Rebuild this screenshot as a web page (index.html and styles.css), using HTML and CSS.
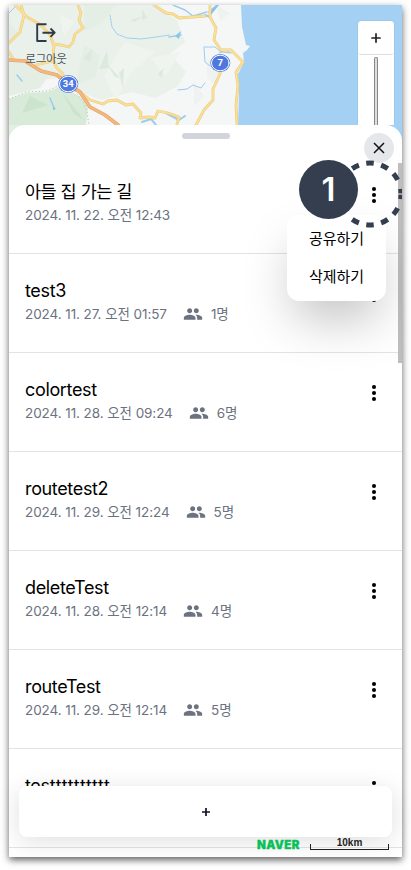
FILE: index.html
```html
<!DOCTYPE html>
<html lang="ko">
<head>
<meta charset="utf-8">
<meta name="viewport" content="width=device-width">
<title>경로 목록</title>
<link rel="stylesheet" href="styles.css">
</head>
<body>
<svg class="defs" aria-hidden="true">
  <symbol id="people" viewBox="0 0 24 24"><path d="M16 11c1.66 0 2.99-1.34 2.99-3S17.66 5 16 5s-3 1.34-3 3 1.34 3 3 3zm-8 0c1.66 0 2.99-1.34 2.99-3S9.66 5 8 5 5 6.340 5 8s1.340 3 3 3zm0 2c-2.330 0-7 1.170-7 3.500V19h14v-2.500c0-2.330-4.670-3.500-7-3.500zm8 0c-.29 0-.62.02-.97.05 1.160.84 1.970 1.970 1.970 3.450V19h6v-2.500c0-2.330-4.670-3.500-7-3.500z"/></symbol>
  <symbol id="dots" viewBox="0 0 6 18"><circle cx="3" cy="3" r="2.050"/><circle cx="3" cy="9" r="2.050"/><circle cx="3" cy="15" r="2.050"/></symbol>
</svg>
<div class="app">
  <div class="map">
    <svg class="map-art" viewBox="9 5 393 120" fill="none" stroke-linejoin="round" stroke-linecap="round">
      <path fill="#f5f6f6" d="M9 5h393v120H9z"/>
      <path fill="#eaf1ea" d="M9 5h146l22 15 8 22-15 12 16 18-8 14-22 12-25-6-30 8-20-8-16-14-30 2-30 12z"/>
      <path fill="#e4eee4" d="M84 5h32l-14 18-18 8zM9 22l10 12-10 8zM20 62l30 12-10 14-31 8V62zM84 45l16 10-4 22-20 8z"/>
      <path fill="#eff4ef" d="M125 42l30 10-25 22-14 26-12-24zM150 58l30-6-14 24zM60 14l14 8-10 14z"/>
      <path fill="#dce9dd" d="M142 9l5 9-5 2zM99 69l8-18 2 17zM119 73l5-5-1 20zM158 74l6-6-3 10zM84 58l9-10-3 14zM130 20l14-4-10 6zM107 64l13 14-5-1z"/>
      <path fill="#d8ebd8" d="M9 99l18-6 20-1 15-6 18 11 8 10-2 18H9z"/>
      <path fill="#cce3cd" d="M30 96l18 9-26 8zM62 92l22 28-10-6z"/>
      <path stroke="#b5c6b4" stroke-dasharray=".5 3" d="M9 99l18-7 20-1 14-6 14 6 9 12 3 10 2 12"/>
      <path fill="#eff2ef" d="M207 58l12 12-4 15-8-8zM194 82l10 14-10 10zM216 5l14 8-10 8z"/>
      <path fill="#a4d1f3" d="M241 5l1 22 4 18 4 1-3 4-4 3 1 9-6 12 1 20-1 31h164V5z"/>
      <g stroke="#9ccdf0" stroke-width="1">
        <path stroke-dasharray="2 1" d="M110 15l2 12 5 7 10 4 14 1 15-2 14-2"/>
        <path stroke-width="1.500" d="M169 37l12-2M17 75l5 6M50 98l4 10M173 5l12 5 8 6 14-4"/>
        <path d="M178 90l9-1 6-4 8 3 4-5M9 13l8-8M205 47h10l6 5 10 1M219 53l7-3 4 3M204 47l1 15 5 4"/>
        <path stroke-width="2" d="M142 122l9-3 5 6M164 112l15 8 6-4M210 17l-5-2"/>
      </g>
      <path fill="#87c4ef" d="M175 36l6-5-2 8zM53 106l3 3-3 1zM208 12l8-7h3l-8 10z"/>
      <g stroke="#e8c982" stroke-width="2.800">
        <path d="M21 5l3 10-4 17-11 11M15 5l12 12 14 8 9 10 4 11-1 12 3 9 7 7 1 9M78 5l3 8-2 7 4 8-8 6-2 8-4 5-8-2-7-1M9 52l4 7M36 65l17-4M78 90l12 10 13 4 5-3 9-1 9 5 7-1 8 9-1 5 9-1 6 1 3-7 10 2 11 4-2 7M154 5l12 8 7 1 6 4 26-2M196 125l8-15 9-10 0-11 7-15v-11M210 5v12l6 11-2 12 7 10 10 0 12 12-7 10 2 13-2 20 1 20"/>
      </g>
      <g stroke="#fbdf94" stroke-width="1.800">
        <path d="M21 5l3 10-4 17-11 11M15 5l12 12 14 8 9 10 4 11-1 12 3 9 7 7 1 9M78 5l3 8-2 7 4 8-8 6-2 8-4 5-8-2-7-1M9 52l4 7M36 65l17-4M78 90l12 10 13 4 5-3 9-1 9 5 7-1 8 9-1 5 9-1 6 1 3-7 10 2 11 4-2 7M154 5l12 8 7 1 6 4 26-2M196 125l8-15 9-10 0-11 7-15v-11M210 5v12l6 11-2 12 7 10 10 0 12 12-7 10 2 13-2 20 1 20"/>
      </g>
      <path stroke="#dda368" stroke-width="3.600" d="M9 60l16 1 16 10 16 4 11 9 12 8 10 15 15 8 13 10"/>
      <path stroke="#f5b77b" stroke-width="2.400" d="M9 60l16 1 16 10 16 4 11 9 12 8 10 15 15 8 13 10"/>
      <g fill="#4f78df"><ellipse cx="68.300" cy="84" rx="10" ry="9"/><ellipse cx="220.300" cy="63" rx="10" ry="9"/></g>
      <g stroke="#fff" stroke-width="1"><ellipse cx="68.300" cy="84" rx="8.800" ry="7.800"/><ellipse cx="220.300" cy="63" rx="8.800" ry="7.800"/></g>
      <g class="shield"><text x="68.300" y="87.400">34</text><text x="220.300" y="66.400">7</text></g>
    </svg>
    <button class="logout">
      <svg width="24" height="24" viewBox="0 0 24 24" fill="none" stroke="#303949" stroke-width="1.900" stroke-linejoin="round"><path d="M12.500 4.200H3.200v16.800h9.300M8.500 12.700h12M16.500 8.500l4.200 4.200-4.200 4.200"/></svg>
      <span>로그아웃</span>
    </button>
    <div class="zoom">
      <button class="zoom-in"><svg width="10" height="10" viewBox="0 0 10 10" stroke="#222" stroke-width="1.700"><path d="M5 .3v9.400M.3 5h9.400"/></svg></button>
      <div class="track"></div>
    </div>
  </div>

  <main class="sheet">
    <div class="handle"></div>
    <ul class="list">
      <li class="row"><div><h2>아들 집 가는 길</h2><p class="meta"><time>2024. 11. 22. 오전 12:43</time></p></div><svg class="more"><use href="#dots"/></svg></li>
      <li class="row"><div><h2>test3</h2><p class="meta"><time>2024. 11. 27. 오전 01:57</time><svg class="people"><use href="#people"/></svg><span>1명</span></p></div><svg class="more"><use href="#dots"/></svg></li>
      <li class="row"><div><h2>colortest</h2><p class="meta"><time>2024. 11. 28. 오전 09:24</time><svg class="people"><use href="#people"/></svg><span>6명</span></p></div><svg class="more"><use href="#dots"/></svg></li>
      <li class="row"><div><h2>routetest2</h2><p class="meta"><time>2024. 11. 29. 오전 12:24</time><svg class="people"><use href="#people"/></svg><span>5명</span></p></div><svg class="more"><use href="#dots"/></svg></li>
      <li class="row"><div><h2>deleteTest</h2><p class="meta"><time>2024. 11. 28. 오전 12:14</time><svg class="people"><use href="#people"/></svg><span>4명</span></p></div><svg class="more"><use href="#dots"/></svg></li>
      <li class="row"><div><h2>routeTest</h2><p class="meta"><time>2024. 11. 29. 오전 12:14</time><svg class="people"><use href="#people"/></svg><span>5명</span></p></div><svg class="more"><use href="#dots"/></svg></li>
      <li class="row"><div><h2>tes<span class="spaced">tttttttttt</span></h2></div><svg class="more"><use href="#dots"/></svg></li>
    </ul>
    <div class="scrollbar"></div>
    <button class="close"><svg width="12" height="12" viewBox="0 0 12 12" stroke="#111" stroke-width="1.500"><path d="M1 1l10 10M11 1L1 11"/></svg></button>
    <div class="menu"><button>공유하기</button><button>삭제하기</button></div>
    <svg class="ring" viewBox="-34 -34 68 68" fill="none" stroke="#343e4e" stroke-width="5">
      <path pathLength="180" stroke-dasharray="0 1.500 8 17.500 14 14 14 14 14 14 14 999" d="M31 0A31 31 0 0 1-31 0"/>
      <path pathLength="180" stroke-dasharray="0 1.500 8 17.500 14 14 14 14 14 14 14 999" d="M31 0A31 31 0 0 0-31 0"/>
    </svg>
    <div class="step">1</div>
  </main>

  <button class="add"><svg width="8" height="8" viewBox="0 0 8 8" stroke="#111527" stroke-width="1.700"><path d="M4 0v8M0 4h8"/></svg></button>
  <footer class="legend"><span class="brand">NAVER</span><span class="scale">10km</span></footer>
</div>
</body>
</html>
```

FILE: styles.css
```css
* { box-sizing: border-box; }

body {
  margin: 0;
  min-height: 870px;
  padding: 5px 0 0 9px;
  background: #fff;
  font-family: Inter, "Noto Sans CJK KR", sans-serif;
  color: #000;
}

button {
  border: 0;
  padding: 0;
  background: none;
  font: inherit;
  color: inherit;
}

.defs { position: absolute; width: 0; height: 0; }

/* The gradient strip shows behind the rounded top corners of the sheet */
.app {
  position: relative;
  width: 393px;
  height: 852px;
  background: linear-gradient(90deg, #e3efe3 50%, #a4d1f3 50%) 0 120px / 100% 24px no-repeat, #fff;
  box-shadow: 0 3px 7px rgba(0, 0, 0, .62);
}

.map { position: relative; height: 120px; }
.map-art { display: block; width: 393px; height: 120px; }
.shield { fill: #fff; font: 700 9.500px Roboto, sans-serif; text-anchor: middle; }

.logout {
  position: absolute;
  left: 12px;
  top: 15px;
  width: 50px;
  display: flex;
  flex-direction: column;
  align-items: center;
  color: #4a5361;
  font-size: 11.500px;
  line-height: 16px;
  letter-spacing: -.25px;
  white-space: nowrap;
}
.logout svg { margin-bottom: 7px; }

.zoom {
  position: absolute;
  left: 349px;
  top: 16px;
  width: 36px;
  height: 104px;
  display: flex;
  flex-direction: column;
  align-items: center;
  background: #fff;
  border-radius: 3px 3px 0 0;
  box-shadow: 0 0 1px rgba(0, 0, 0, .35);
}
.zoom-in {
  display: flex;
  align-items: center;
  justify-content: center;
  width: 36px;
  height: 34px;
  border-bottom: 1px solid #ddd;
  border-radius: 3px;
}
.track {
  flex: 1;
  width: 4px;
  margin-top: 2px;
  border: 1px solid #888;
  border-bottom: 0;
  border-radius: 2px 2px 0 0;
  background: #ddd;
}

.sheet {
  position: relative;
  height: 732px;
  overflow: hidden;
  border-radius: 16px 16px 0 0;
  background: #fff;
}

.handle {
  width: 48px;
  height: 6px;
  margin: 8px auto 0;
  border-radius: 3px;
  background: #d1d5db;
}
.list { margin: 16px 0 0; padding: 0; list-style: none; }
.row {
  display: flex;
  justify-content: space-between;
  height: 99px;
  padding: 24px 25px 0 16px;
  border-bottom: 1px solid #e1e3e6;
}
.row h2 {
  margin: 0;
  font-size: 18px;
  font-weight: 400;
  line-height: 26px;
  letter-spacing: -.35px;
}
.row:first-child h2 { font-size: 17.500px; letter-spacing: -.5px; }
.row .spaced { letter-spacing: .6px; }
.meta {
  display: flex;
  align-items: center;
  height: 20px;
  margin: 0;
  color: #6b7280;
  font-size: 13.500px;
  line-height: 20px;
  letter-spacing: -.08px;
}
.people { width: 20px; height: 20px; margin: 0 8px 0 16px; fill: #6b7280; }
.more { width: 6px; height: 18px; margin-top: 7px; }

.scrollbar {
  position: absolute;
  left: 389px;
  top: 38px;
  width: 4px;
  height: 200px;
  background: #bebebe;
}
.close {
  position: absolute;
  left: 355px;
  top: 8px;
  width: 30px;
  height: 30px;
  display: flex;
  align-items: center;
  justify-content: center;
  border-radius: 50%;
  background: #e5e7eb;
}
.menu {
  position: absolute;
  left: 278px;
  top: 90px;
  width: 99px;
  height: 86px;
  padding-top: 5px;
  display: flex;
  flex-direction: column;
  border-radius: 12px;
  background: #fff;
  box-shadow: 0 25px 50px -8px rgba(0, 0, 0, .25);
}
.menu button { height: 38px; font-size: 15px; line-height: 38px; }
.ring { position: absolute; left: 327px; top: 35px; width: 68px; height: 68px; }
.step {
  position: absolute;
  left: 290px;
  top: 35px;
  width: 59px;
  height: 59px;
  border-radius: 50%;
  background: #343e4e;
  color: #fff;
  font: 600 33px/59px Inter, sans-serif;
  text-align: center;
}

.add {
  position: absolute;
  left: 10px;
  top: 781px;
  width: 373px;
  height: 51px;
  display: flex;
  align-items: center;
  justify-content: center;
  border-radius: 8px;
  background: #fff;
  box-shadow: 0 4px 24px rgba(0, 0, 0, .13);
}
.legend {
  position: absolute;
  left: 248px;
  top: 832px;
  display: flex;
  gap: 10px;
}
.brand {
  width: 43px;
  color: #08c158;
  font: 900 11.500px/17px Inter, sans-serif;
  letter-spacing: .4px;
  -webkit-text-stroke: .3px #08c158;
}
.scale {
  width: 79px;
  height: 13px;
  color: #222;
  font: 700 10px/11px "Liberation Sans", sans-serif;
  text-align: center;
  background: linear-gradient(#222, #222) 0 100% / 1px 6px no-repeat, linear-gradient(#222, #222) 100% 100% / 1px 6px no-repeat, linear-gradient(#222, #222) 0 100% / 100% 1px no-repeat;
}
```
